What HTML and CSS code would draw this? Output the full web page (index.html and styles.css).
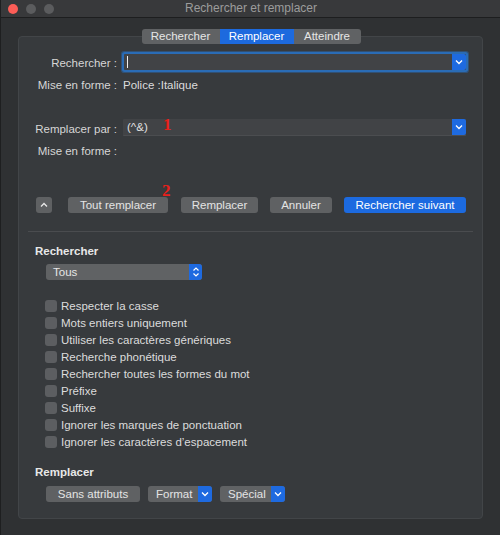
FILE: index.html
```html
<!DOCTYPE html>
<html lang="fr">
<head>
<meta charset="utf-8">
<title>Rechercher et remplacer</title>
<link rel="stylesheet" href="styles.css">
</head>
<body>
<div class="window">
  <div class="titlebar">
    <div class="lights">
      <span class="light red"></span>
      <span class="light gray"></span>
      <span class="light gray"></span>
    </div>
    <div class="title">Rechercher et remplacer</div>
  </div>
  <div class="content">
    <div class="tabs">
      <div class="tab tab-1">Rechercher</div>
      <div class="tab tab-2 active">Remplacer</div>
      <div class="tab tab-3">Atteindre</div>
    </div>
    <div class="panel">
      <div class="form">
        <div class="row field-row first">
          <div class="label">Rechercher :</div>
          <div class="field focus">
            <span class="caret"></span>
            <span class="drop"><svg width="8" height="6" viewBox="0 0 8 6"><path d="M1 1.5 L4 4.5 L7 1.5" fill="none" stroke="#fff" stroke-width="1.3"/></svg></span>
          </div>
        </div>
        <div class="row text-row r1">
          <div class="label">Mise en forme :</div>
          <div class="value">Police :Italique</div>
        </div>
        <div class="row field-row r2">
          <div class="label">Remplacer par :</div>
          <div class="field">
            <span class="ftext">(^&amp;)</span>
            <span class="drop"><svg width="8" height="6" viewBox="0 0 8 6"><path d="M1 1.5 L4 4.5 L7 1.5" fill="none" stroke="#fff" stroke-width="1.3"/></svg></span>
          </div>
          <span class="mark mark-1">1</span>
        </div>
        <div class="row text-row r3">
          <div class="label">Mise en forme :</div>
          <div class="value"></div>
        </div>
      </div>

      <div class="actions">
        <div class="btn btn-up"><svg width="8" height="6" viewBox="0 0 8 6"><path d="M1 4.5 L4 1.5 L7 4.5" fill="none" stroke="#e8e8e8" stroke-width="1.3"/></svg></div>
        <div class="btn btn-all">Tout remplacer<span class="mark mark-2">2</span></div>
        <div class="btn btn-rep">Remplacer</div>
        <div class="btn btn-cancel">Annuler</div>
        <div class="btn primary btn-next">Rechercher suivant</div>
      </div>

      <div class="sep"></div>

      <div class="section">
        <div class="heading">Rechercher</div>
        <div class="select">
          <span class="select-text">Tous</span>
          <span class="stepper"><svg width="8" height="12" viewBox="0 0 8 12"><path d="M1.5 4.5 L4 2 L6.5 4.5 M1.5 7.5 L4 10 L6.5 7.5" fill="none" stroke="#fff" stroke-width="1.2"/></svg></span>
        </div>
        <ul class="checks">
          <li><span class="box"></span>Respecter la casse</li>
          <li><span class="box"></span>Mots entiers uniquement</li>
          <li><span class="box"></span>Utiliser les caractères génériques</li>
          <li><span class="box"></span>Recherche phonétique</li>
          <li><span class="box"></span>Rechercher toutes les formes du mot</li>
          <li><span class="box"></span>Préfixe</li>
          <li><span class="box"></span>Suffixe</li>
          <li><span class="box"></span>Ignorer les marques de ponctuation</li>
          <li><span class="box"></span>Ignorer les caractères d’espacement</li>
        </ul>
        <div class="heading heading-2">Remplacer</div>
        <div class="bottom-btns">
          <div class="btn btn-sans">Sans attributs</div>
          <div class="popup popup-format"><span class="popup-text">Format</span><span class="drop"><svg width="8" height="6" viewBox="0 0 8 6"><path d="M1 1.5 L4 4.5 L7 1.5" fill="none" stroke="#fff" stroke-width="1.3"/></svg></span></div>
          <div class="popup popup-special"><span class="popup-text">Spécial</span><span class="drop"><svg width="8" height="6" viewBox="0 0 8 6"><path d="M1 1.5 L4 4.5 L7 1.5" fill="none" stroke="#fff" stroke-width="1.3"/></svg></span></div>
        </div>
      </div>
    </div>
  </div>
</div>
</body>
</html>
```

FILE: styles.css
```css
* { box-sizing: border-box; }

html, body {
  margin: 0;
  padding: 0;
}

body {
  width: 500px;
  height: 535px;
  background: #2f3133;
  font-family: "Liberation Sans", Arial, sans-serif;
  font-size: 11.5px;
  color: #dcdcdc;
  overflow: hidden;
}

.window {
  width: 500px;
  height: 535px;
  border-left: 1px solid #1e1f20;
  background: #2f3133;
  display: flex;
  flex-direction: column;
}

.titlebar {
  height: 18px;
  flex: none;
  background: #38393b;
  border-bottom: 1px solid #1d1e1f;
  display: flex;
  align-items: center;
  position: relative;
}

.lights {
  display: flex;
  gap: 8px;
  padding-left: 7px;
}

.light {
  width: 10px;
  height: 10px;
  border-radius: 50%;
  display: block;
}

.light.red { background: #fc5d57; }
.light.gray { background: #5b5c5e; }

.title {
  position: absolute;
  left: 0;
  right: 0;
  top: 0;
  height: 17px;
  line-height: 17px;
  text-align: center;
  color: #9c9c9c;
  font-size: 12px;
  padding-left: 1px;
}

.content {
  flex: 1;
  padding: 11px 17px 16px 17px;
  display: flex;
  flex-direction: column;
}

.tabs {
  display: flex;
  justify-content: center;
  height: 15px;
  margin-bottom: -8px;
  position: relative;
  z-index: 1;
  padding-left: 1px;
}

.tab {
  height: 15px;
  line-height: 15px;
  background: #606264;
  color: #e6e6e6;
  text-align: center;
  font-size: 11.5px;
}

.tab-1 { width: 78px; border-radius: 3px 0 0 3px; }
.tab-2 { width: 74px; }
.tab-3 { width: 67px; border-radius: 0 3px 3px 0; }

.tab.active {
  background: #1d6ade;
  color: #ffffff;
}

.panel {
  flex: 1;
  background: #373a3d;
  border: 1px solid #424548;
  border-radius: 4px;
  display: flex;
  flex-direction: column;
}

.form {
  display: flex;
  flex-direction: column;
  padding-right: 16px;
}

.row {
  display: flex;
  align-items: center;
  position: relative;
}

.label {
  width: 98px;
  flex: none;
  text-align: right;
  color: #d6d6d6;
}

.value {
  margin-left: 6px;
  color: #dcdcdc;
}

.field-row .field {
  margin-left: 6px;
}

.first { margin-top: 17px; }
.r1 { margin-top: 8px; height: 14px; }
.r2 { margin-top: 27px; }
.r3 { margin-top: 8px; height: 14px; }

.first .label { padding-top: 1px; }
.r2 .label { padding-top: 3px; }

.field {
  flex: 1;
  height: 17px;
  background: #414346;
  border-bottom: 1px solid #4b4d50;
  display: flex;
  align-items: center;
  position: relative;
  border-radius: 1px;
}

.field.focus {
  height: 16px;
  box-shadow: 0 0 0 2px #2a6cb6, 0 0 0 3px rgba(42, 108, 182, 0.45);
  border-bottom: none;
  margin-left: 7px;
}

.caret {
  width: 1px;
  height: 12px;
  background: #f0f0f0;
  margin-left: 3px;
}

.ftext {
  margin-left: 4px;
  color: #e0e0e0;
}

.drop {
  margin-left: auto;
  width: 14px;
  height: 100%;
  background: #1e6ae0;
  border-radius: 0 2px 2px 0;
  display: flex;
  align-items: center;
  justify-content: center;
}

.mark {
  position: absolute;
  font-family: "Liberation Serif", "Times New Roman", serif;
  font-weight: bold;
  font-size: 17px;
  color: #e8201b;
  line-height: 1;
}

.mark-1 { left: 144px; top: -3px; }
.mark-2 { left: 94px; top: -15px; }

.actions {
  display: flex;
  align-items: center;
  margin-top: 39px;
  padding-left: 17px;
  height: 16px;
}

.btn {
  height: 16px;
  line-height: 16px;
  background: #5f6163;
  color: #e4e4e4;
  border-radius: 3px;
  text-align: center;
  position: relative;
  font-size: 11.5px;
}

.btn.primary {
  background: #1c6ae0;
  color: #ffffff;
}

.btn-up {
  width: 16px;
  display: flex;
  align-items: center;
  justify-content: center;
}

.btn-all { width: 100px; margin-left: 16px; }
.btn-rep { width: 77px; margin-left: 13px; }
.btn-cancel { width: 62px; margin-left: 12px; }
.btn-next { width: 122px; margin-left: 12px; }

.sep {
  height: 1px;
  background: #4a4c4f;
  margin: 18px 9px 0 9px;
}

.section {
  padding-left: 16px;
  display: flex;
  flex-direction: column;
}

.heading {
  font-weight: bold;
  color: #e8e8e8;
  height: 14px;
  line-height: 14px;
  margin-top: 12px;
}

.select {
  margin-top: 6px;
  margin-left: 11px;
  width: 156px;
  height: 16px;
  background: #606264;
  border-radius: 3px;
  display: flex;
  align-items: center;
}

.select-text {
  margin-left: 7px;
  color: #e6e6e6;
}

.stepper {
  margin-left: auto;
  width: 13px;
  height: 16px;
  background: #1e6ae0;
  border-radius: 0 3px 3px 0;
  display: flex;
  align-items: center;
  justify-content: center;
}

.checks {
  list-style: none;
  margin: 17px 0 0 10px;
  padding: 0;
}

.checks li {
  height: 17px;
  display: flex;
  align-items: center;
  color: #dcdcdc;
}

.box {
  width: 12px;
  height: 12px;
  border-radius: 3px;
  background: #5c5e61;
  margin-right: 4px;
  flex: none;
}

.heading-2 { margin-top: 15px; }

.bottom-btns {
  display: flex;
  margin-top: 7px;
  margin-left: 11px;
  height: 16px;
}

.btn-sans { width: 94px; }

.popup {
  height: 16px;
  background: #606264;
  border-radius: 3px;
  display: flex;
  align-items: center;
  color: #e4e4e4;
}

.popup .drop {
  border-radius: 0 3px 3px 0;
}

.popup-text { margin-left: 8px; }

.popup-format { width: 64px; margin-left: 8px; }
.popup-special { width: 65px; margin-left: 8px; }
```
